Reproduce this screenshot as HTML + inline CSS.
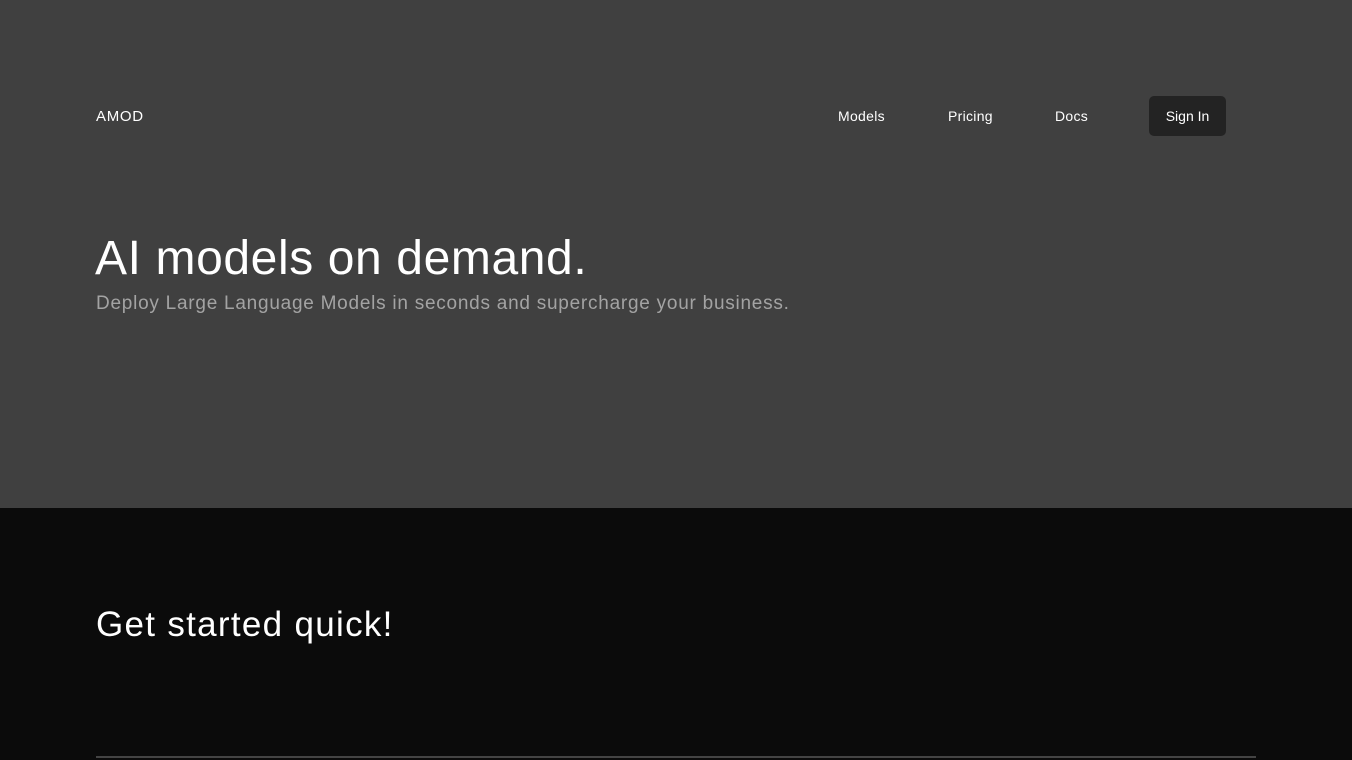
<!DOCTYPE html>
<html><head><style>
*{margin:0;padding:0;box-sizing:border-box}
body{width:1352px;height:760px;overflow:hidden;font-family:"Liberation Sans",sans-serif;background:#0b0b0b}
.top{position:relative;height:508px;background:#404040;color:#fff}
.logo{position:absolute;left:96px;top:108px;font-size:15px;letter-spacing:0.7px}
.nav a{position:absolute;top:108px;font-size:14px;color:#fff;text-decoration:none;letter-spacing:0.3px}
.btn{position:absolute;left:1149px;top:96px;width:77px;height:40px;background:#232323;border-radius:5px;color:#fff;font-size:14px;line-height:40px;text-align:center}
h1{position:absolute;left:95px;top:231px;font-size:48px;font-weight:400;letter-spacing:0.6px}
.sub{position:absolute;left:96px;top:293px;font-size:19px;color:#a3a3a3;letter-spacing:0.75px}
h2{position:absolute;left:96px;top:605px;font-size:35px;font-weight:400;color:#fff;letter-spacing:1.3px}
.line{position:absolute;left:96px;top:756px;width:1160px;height:2px;background:#444}
</style></head><body>
<div class="top">
<div class="logo">AMOD</div>
<div class="nav"><a style="left:838px">Models</a><a style="left:948px">Pricing</a><a style="left:1055px">Docs</a></div>
<div class="btn">Sign In</div>
<h1>AI models on demand.</h1>
<div class="sub">Deploy Large Language Models in seconds and supercharge your business.</div>
</div>
<h2>Get started quick!</h2>
<div class="line"></div>
</body></html>
